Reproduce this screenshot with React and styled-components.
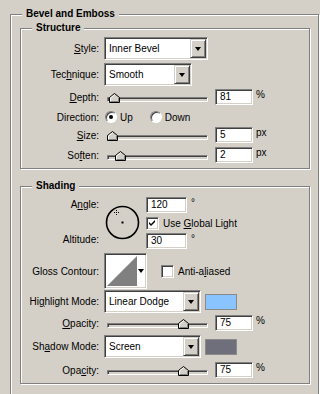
import React from 'react';
import styled, { createGlobalStyle } from 'styled-components';

const GlobalStyle = createGlobalStyle`
  html, body {
    margin: 0;
    background: #d4d0c8;
    overflow: hidden;
  }
  body {
    font-family: "Liberation Sans", Arial, sans-serif;
    font-size: 10px;
    color: #000;
  }
`;

const Group = styled.div`
  position: relative;
  box-sizing: border-box;
  border: 1px solid #808080;
  box-shadow: inset 1px 1px #fff, 1px 1px #fff;
`;

const Outer = styled(Group)`
  margin: 14px 0 0 10px;
  width: 309px;
  height: 390px;
  padding: 13px 8px 0 9px;
`;

const Section = styled(Group)`
  width: 290px;
  height: ${p => p.$h}px;
  margin-top: ${p => p.$mt || 0}px;
  padding: ${p => p.$pt}px 0 0 0;
`;

const Legend = styled.div`
  position: absolute;
  top: -7px;
  left: 11px;
  padding: 0 4px;
  line-height: 12px;
  font-weight: bold;
  background: #d4d0c8;
`;

const Row = styled.div`
  display: flex;
  align-items: center;
  height: ${p => p.$h || 16}px;
  margin-top: ${p => p.$mt || 0}px;
`;

const Label = styled.div`
  flex: none;
  width: 78px;
  margin-right: 5px;
  text-align: right;
  white-space: nowrap;
`;

const Sunken = styled.div`
  box-sizing: border-box;
  border: 1px solid;
  border-color: #808080 #fff #fff #808080;
  box-shadow: inset 1px 1px #404040, inset -1px -1px #d4d0c8;
  background: #fff;
`;

const SelectBox = styled(Sunken)`
  display: flex;
  width: ${p => p.$w}px;
  height: 23px;
  padding: 1px;
`;

const SelectText = styled.div`
  flex: 1;
  padding-left: 3px;
  display: flex;
  align-items: center;
`;

const ArrowButton = styled.div`
  box-sizing: border-box;
  width: 16px;
  display: flex;
  align-items: center;
  justify-content: center;
  background: #d4d0c8;
  border: 1px solid;
  border-color: #d4d0c8 #404040 #404040 #d4d0c8;
  box-shadow: inset 1px 1px #fff, inset -1px -1px #808080;
`;

const Arrow = styled.span`
  width: 0;
  height: 0;
  border-left: 3.5px solid transparent;
  border-right: 3.5px solid transparent;
  border-top: 4px solid #000;
`;

const Field = styled(Sunken)`
  width: ${p => p.$w || 38}px;
  height: 16px;
  padding-left: 4px;
  line-height: 14px;
`;

const Unit = styled.span`
  align-self: flex-start;
  margin-left: ${p => p.$ml || 3}px;
  line-height: 12px;
`;

const SliderWrap = styled.div`
  position: relative;
  flex: none;
  width: 104px;
  height: 16px;
  margin-right: 7px;
`;

const Track = styled.div`
  box-sizing: border-box;
  margin: 8px 0 0 3px;
  width: 101px;
  height: 5px;
  border: 1px solid;
  border-color: #808080 #fff #fff #808080;
  box-shadow: inset 1px 1px #404040;
  background: #d4d0c8;
`;

const Thumb = styled.svg`
  position: absolute;
  top: 4px;
  left: ${p => p.$x}px;
`;

const RadioDot = styled.span`
  position: relative;
  flex: none;
  box-sizing: border-box;
  width: 12px;
  height: 12px;
  margin: 0 3px 0 ${p => p.$ml || 0}px;
  border-radius: 50%;
  border: 1px solid;
  border-color: #808080 #fff #fff #808080;
  box-shadow: inset 1px 1px #404040;
  background: #fff;
  &::after {
    content: '';
    display: ${p => (p.$on ? 'block' : 'none')};
    position: absolute;
    left: 3px;
    top: 3px;
    width: 4px;
    height: 4px;
    border-radius: 50%;
    background: #000;
  }
`;

const Check = styled(Sunken)`
  flex: none;
  width: 13px;
  height: 13px;
  margin-right: 4px;
  display: flex;
  align-items: center;
  justify-content: center;
`;

const CheckRow = styled.div`
  display: flex;
  align-items: center;
  height: 13px;
  margin: ${p => p.$m || '0'};
`;

const AngleBlock = styled.div`
  display: flex;
  align-items: center;
  height: 51px;
  margin-top: 10px;
`;

const LabelStack = styled.div`
  flex: none;
  width: 78px;
  height: 100%;
  display: flex;
  flex-direction: column;
  justify-content: space-between;
  text-align: right;
  line-height: 16px;
`;

const Dial = styled.svg`
  flex: none;
  margin: 0 6px 0 6px;
`;

const FieldStack = styled.div`
  display: flex;
  flex-direction: column;
  height: 100%;
`;

const Contour = styled(Sunken)`
  display: flex;
  width: 43px;
  height: 36px;
  padding: 2px;
`;

const ContourArrow = styled.div`
  flex: 1;
  display: flex;
  justify-content: center;
  align-items: center;
`;

const Swatch = styled.div`
  box-sizing: border-box;
  width: 32px;
  height: 16px;
  margin-left: 4px;
  border: 1px solid #8a8a8a;
  background: ${p => p.$c};
`;

const Mnemonic = styled.span`
  text-decoration: underline;
`;

const Select = ({ w, value }) => (
  <SelectBox $w={w}>
    <SelectText>{value}</SelectText>
    <ArrowButton>
      <Arrow />
    </ArrowButton>
  </SelectBox>
);

const Slider = ({ x }) => (
  <SliderWrap>
    <Track />
    <Thumb $x={x} width="11" height="10" viewBox="0 0 11 10">
      <polygon points="0.5,9.5 0.5,4.5 5.5,0.5 10.5,4.5 10.5,9.5" fill="#d4d0c8" stroke="#000" />
      <polyline points="1.5,8.5 1.5,5 5.5,1.8" fill="none" stroke="#fff" />
      <polyline points="9.5,5 9.5,8.5 1.5,8.5" fill="none" stroke="#808080" />
    </Thumb>
  </SliderWrap>
);

const SliderRow = ({ label, x, value, unit, mt }) => (
  <Row $mt={mt}>
    <Label>{label}</Label>
    <Slider x={x} />
    <Field>{value}</Field>
    <Unit>{unit}</Unit>
  </Row>
);

const CheckMark = () => (
  <svg width="7" height="7" viewBox="0 0 7 7">
    <path d="M0 2 L2 4 L6 0 L6 2 L2 6 L0 4 Z" fill="#000" />
  </svg>
);

const App = () => (
  <>
    <GlobalStyle />
    <Outer>
      <Legend>Bevel and Emboss</Legend>
      <Section $h={141} $pt={8}>
        <Legend>Structure</Legend>
        <Row $h={23}>
          <Label><Mnemonic>S</Mnemonic>tyle:</Label>
          <Select w={104} value="Inner Bevel" />
        </Row>
        <Row $h={23} $mt={3}>
          <Label>Tec<Mnemonic>h</Mnemonic>nique:</Label>
          <Select w={88} value="Smooth" />
        </Row>
        <SliderRow mt={3} label={<><Mnemonic>D</Mnemonic>epth:</>} x={5} value="81" unit="%" />
        <Row $mt={4}>
          <Label>Direction:</Label>
          <RadioDot $on $ml={1} />
          <span>Up</span>
          <RadioDot $ml={17} />
          <span>Down</span>
        </Row>
        <SliderRow mt={2} label={<><Mnemonic>S</Mnemonic>ize:</>} x={3} value="5" unit="px" />
        <SliderRow mt={4} label={<>So<Mnemonic>f</Mnemonic>ten:</>} x={11} value="2" unit="px" />
      </Section>

      <Section $h={198} $mt={17} $pt={0}>
        <Legend>Shading</Legend>
        <AngleBlock>
          <LabelStack>
            <span>A<Mnemonic>n</Mnemonic>gle:</span>
            <span>Altitude:</span>
          </LabelStack>
          <Dial width="35" height="35" viewBox="0 0 35 35">
            <circle cx="17.5" cy="17.5" r="16" fill="none" stroke="#000" strokeWidth="1.6" />
            <rect x="16.5" y="16.5" width="2" height="2" fill="#000" />
            <g fill="#000">
              <rect x="11" y="5" width="1" height="1" />
              <rect x="11" y="9" width="1" height="1" />
              <rect x="9" y="7" width="1" height="1" />
              <rect x="13" y="7" width="1" height="1" />
              <rect x="11" y="7" width="1" height="1" />
            </g>
          </Dial>
          <FieldStack>
            <Row>
              <Field $w={41}>120</Field>
              <Unit $ml={4}>°</Unit>
            </Row>
            <CheckRow $m="4px 0 3px 0">
              <Check><CheckMark /></Check>
              <span>Use <Mnemonic>G</Mnemonic>lobal Light</span>
            </CheckRow>
            <Row>
              <Field $w={41}>30</Field>
              <Unit $ml={4}>°</Unit>
            </Row>
          </FieldStack>
        </AngleBlock>

        <Row $h={36} $mt={5}>
          <Label>Gloss Contour:</Label>
          <Contour>
            <svg width="30" height="30" viewBox="0 0 30 30">
              <rect width="30" height="30" fill="#fff" />
              <polygon points="0,30 30,0 30,30" fill="#808080" />
            </svg>
            <ContourArrow><Arrow /></ContourArrow>
          </Contour>
          <CheckRow $m="0 0 0 14px">
            <Check />
            <span>Anti-a<Mnemonic>l</Mnemonic>iased</span>
          </CheckRow>
        </Row>

        <Row $h={23} $mt={1}>
          <Label>Hi<Mnemonic>g</Mnemonic>hlight Mode:</Label>
          <Select w={97} value="Linear Dodge" />
          <Swatch $c="#8ac4ff" />
        </Row>
        <SliderRow mt={2} label={<><Mnemonic>O</Mnemonic>pacity:</>} x={74} value="75" unit="%" />
        <Row $h={23} $mt={4}>
          <Label>Sh<Mnemonic>a</Mnemonic>dow Mode:</Label>
          <Select w={97} value="Screen" />
          <Swatch $c="#6e6f7a" />
        </Row>
        <SliderRow mt={4} label={<>Opa<Mnemonic>c</Mnemonic>ity:</>} x={74} value="75" unit="%" />
      </Section>
    </Outer>
  </>
);

export default App;
